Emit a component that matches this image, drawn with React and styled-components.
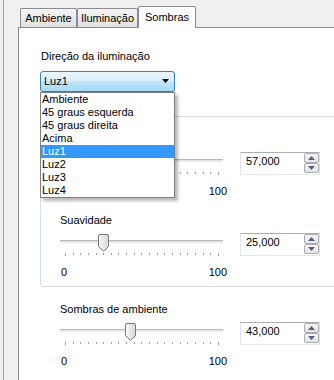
import React from 'react';
import styled, { createGlobalStyle } from 'styled-components';

const tabs = [
  { label: 'Ambiente', width: 57 },
  { label: 'Iluminação', width: 61 },
  { label: 'Sombras', width: 58, active: true },
];

const options = ['Ambiente', '45 graus esquerda', '45 graus direita', 'Acima', 'Luz1', 'Luz2', 'Luz3', 'Luz4'];

const GlobalStyle = createGlobalStyle`
  html, body {
    margin: 0;
    padding: 0;
    background: #f0f0f0;
  }
  body {
    font-family: "Liberation Sans", Arial, sans-serif;
    font-size: 11px;
    color: #000;
  }
`;

const Thumb = ({ value }) => (
  <ThumbWrap style={{ left: `${value * 1.52}px` }}>
    <svg width="11" height="18" viewBox="0 0 11 18">
      <defs>
        <linearGradient id="thumbFill" x1="0" y1="0" x2="1" y2="0">
          <stop offset="0" stopColor="#fbfbfb" />
          <stop offset="1" stopColor="#d6d6d6" />
        </linearGradient>
      </defs>
      <path
        d="M2 0.5 H9 A1.5 1.5 0 0 1 10.5 2 V12.5 L5.5 17.3 L0.5 12.5 V2 A1.5 1.5 0 0 1 2 0.5 Z"
        fill="url(#thumbFill)"
        stroke="#777"
      />
    </svg>
  </ThumbWrap>
);

const SpinArrow = ({ up }) => (
  <svg width="7" height="4" viewBox="0 0 7 4">
    <path d={up ? 'M0 4 L3.5 0 L7 4 Z' : 'M0 0 L3.5 4 L7 0 Z'} fill="#4d6185" />
  </svg>
);

// covered: the block sits under the open drop list, so its label and "0" are not seen
const SliderBlock = ({ label, value, outside, covered }) => (
  <Block $outside={outside}>
    <BlockLabel>{covered ? '\u00a0' : label}</BlockLabel>
    <ControlRow>
      <SliderCol>
        <ThumbArea>
          <Track />
          <Thumb value={value} />
        </ThumbArea>
        <Ticks>
          {Array.from({ length: 21 }).map((_, i) => (
            <Tick key={i} $end={i === 0 || i === 20} />
          ))}
        </Ticks>
        <Scale>
          <ScaleMin $hidden={covered}>0</ScaleMin>
          <span>100</span>
        </Scale>
      </SliderCol>
      <SpinBox>
        <SpinValue>{`${value},000`}</SpinValue>
        <SpinButtons>
          <SpinButton $top>
            <SpinArrow up />
          </SpinButton>
          <SpinButton>
            <SpinArrow />
          </SpinButton>
        </SpinButtons>
      </SpinBox>
    </ControlRow>
  </Block>
);

const App = () => (
  <>
    <GlobalStyle />
    <Frame>
      <Pane>
        <TabRow>
          {tabs.map(t => (
            <Tab key={t.label} $width={t.width} $active={t.active}>
              {t.label}
            </Tab>
          ))}
        </TabRow>
        <Panel>
          <FieldLabel>Direção da iluminação</FieldLabel>
          <ComboWrap>
            <Combo>
              <span>Luz1</span>
              <svg width="7" height="4" viewBox="0 0 7 4">
                <path d="M0 0 H7 L3.5 4 Z" fill="#000" />
              </svg>
            </Combo>
            <DropList>
              {options.map(o => (
                <DropItem key={o} $selected={o === 'Luz1'}>
                  {o}
                </DropItem>
              ))}
            </DropList>
          </ComboWrap>
          <GroupBox>
            <SliderBlock label="Intensidade" value={57} covered />
            <SliderBlock label="Suavidade" value={25} />
          </GroupBox>
          <SliderBlock label="Sombras de ambiente" value={43} outside />
        </Panel>
      </Pane>
    </Frame>
  </>
);

const Frame = styled.div`
  width: 334px;
  height: 380px;
  overflow: hidden;
  box-sizing: border-box;
  padding-left: 3px;
  background: #f0f0f0;
`;

const Pane = styled.div`
  height: 100%;
  box-sizing: border-box;
  border-left: 1px solid #a0a0a0;
  padding: 6px 0 0 14px;
  display: flex;
  flex-direction: column;
`;

const TabRow = styled.div`
  display: flex;
  align-items: flex-end;
  height: 22px;
  padding-left: 2px;
  margin-bottom: -1px;
  position: relative;
  z-index: 1;
`;

const Tab = styled.div`
  box-sizing: border-box;
  width: ${p => p.$width}px;
  height: ${p => (p.$active ? 22 : 19)}px;
  margin-bottom: ${p => (p.$active ? 0 : 1)}px;
  padding-top: ${p => (p.$active ? 4 : 3)}px;
  border: 1px solid #898c95;
  border-bottom: none;
  border-radius: 2px 2px 0 0;
  background: ${p =>
    p.$active ? '#ffffff' : 'linear-gradient(#f4f4f4, #ebebeb 50%, #e0e0e0)'};
  text-align: center;
  line-height: 13px;
  white-space: nowrap;
`;

const Panel = styled.div`
  flex: 1;
  background: #ffffff;
  border-left: 1px solid #898c95;
  border-top: 1px solid #898c95;
  padding: 22px 0 0 21px;
  display: flex;
  flex-direction: column;
  align-items: flex-start;
`;

const FieldLabel = styled.div`
  line-height: 13px;
  margin-left: 1px;
`;

const ComboWrap = styled.div`
  position: relative;
  width: 135px;
  margin-top: 8px;
  z-index: 5;
`;

const Combo = styled.div`
  box-sizing: border-box;
  height: 21px;
  border: 1px solid #3c7fb1;
  border-radius: 3px;
  background: linear-gradient(#eaf6fd 0%, #d9f0fc 45%, #bee6fd 50%, #a7d9f5 100%);
  padding: 3px 5px 0 3px;
  display: flex;
  justify-content: space-between;
  align-items: flex-start;
  line-height: 13px;
  svg {
    margin-top: 4px;
  }
`;

const DropList = styled.div`
  position: absolute;
  top: 100%;
  left: 0;
  width: 135px;
  box-sizing: border-box;
  background: #ffffff;
  border: 1px solid #7a7e86;
  box-shadow: 3px 3px 3px rgba(0, 0, 0, 0.28);
`;

const DropItem = styled.div`
  line-height: 13px;
  padding-left: 1px;
  white-space: nowrap;
  background: ${p => (p.$selected ? '#3399ff' : 'transparent')};
  color: ${p => (p.$selected ? '#ffffff' : '#000000')};
`;

const GroupBox = styled.div`
  align-self: stretch;
  margin: 24px -10px 0 0;
  border: 1px solid #d5dfe5;
  border-radius: 3px;
  padding: 16px 0 7px 19px;
  display: flex;
  flex-direction: column;
  gap: 16px;
`;

const Block = styled.div`
  display: flex;
  flex-direction: column;
  padding-left: ${p => (p.$outside ? 20 : 0)}px;
  margin-top: ${p => (p.$outside ? 16 : 0)}px;
`;

const BlockLabel = styled.div`
  line-height: 13px;
`;

const ControlRow = styled.div`
  display: flex;
  align-items: flex-start;
  gap: 13px;
  margin-top: 6px;
`;

const SliderCol = styled.div`
  width: 167px;
  padding-top: 1px;
  display: flex;
  flex-direction: column;
`;

const ThumbArea = styled.div`
  position: relative;
  width: 163px;
  height: 18px;
`;

const Track = styled.div`
  position: absolute;
  left: 0;
  right: 0;
  top: 6px;
  height: 3px;
  box-sizing: border-box;
  background: #e4e4e4;
  border-top: 1px solid #b9b9b9;
  border-bottom: 1px solid #ededed;
`;

const ThumbWrap = styled.div`
  position: absolute;
  top: 0;
  width: 11px;
  height: 18px;
  svg {
    display: block;
  }
`;

const Ticks = styled.div`
  display: flex;
  justify-content: space-between;
  align-items: flex-start;
  width: 154px;
  margin: 1px 0 0 5px;
  height: 3px;
`;

const Tick = styled.div`
  width: 1px;
  height: ${p => (p.$end ? 3 : 2)}px;
  background: #a0a0a0;
`;

const Scale = styled.div`
  display: flex;
  justify-content: space-between;
  margin-top: 10px;
  padding-left: 1px;
  line-height: 13px;
`;

const ScaleMin = styled.span`
  visibility: ${p => (p.$hidden ? 'hidden' : 'visible')};
`;

const SpinBox = styled.div`
  box-sizing: border-box;
  width: 80px;
  height: 23px;
  border: 1px solid;
  border-color: #abadb3 #dbdfe6 #e3e9ef #e2e3ea;
  display: flex;
  background: #ffffff;
`;

const SpinValue = styled.div`
  flex: 1;
  padding: 2px 0 0 5px;
  line-height: 13px;
`;

const SpinButtons = styled.div`
  width: 15px;
  display: flex;
  flex-direction: column;
  height: 20px;
`;

const SpinButton = styled.div`
  box-sizing: border-box;
  height: ${p => (p.$top ? 11 : 10)}px;
  border: 1px solid #acacac;
  border-radius: 2px;
  background: linear-gradient(#f6f6f6, #e4e4e4);
  display: flex;
  align-items: center;
  justify-content: center;
  svg {
    display: block;
  }
`;

export default App;
